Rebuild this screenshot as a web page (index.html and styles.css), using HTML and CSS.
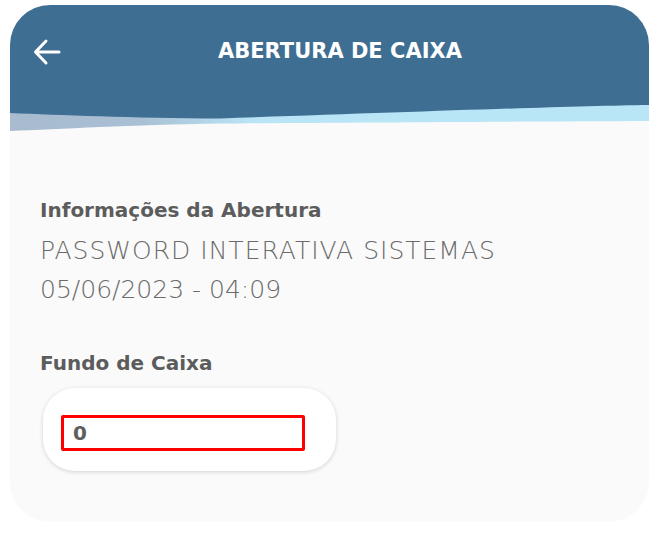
FILE: index.html
```html
<!DOCTYPE html>
<html lang="pt-BR">
<head>
<meta charset="utf-8">
<title>Abertura de Caixa</title>
<link rel="stylesheet" href="styles.css">
</head>
<body>
<div class="card">
  <header class="topbar">
    <button class="back" aria-label="Voltar">
      <svg width="30" height="28" viewBox="0 0 30 28"><path d="M27 14H4M14 3L3.5 14L14 25" fill="none" stroke="#fff" stroke-width="3" stroke-linecap="round" stroke-linejoin="round"/></svg>
    </button>
    <h1 class="title">ABERTURA DE CAIXA</h1>
  </header>
  <svg class="wave" width="639" height="28" viewBox="0 0 639 28" preserveAspectRatio="none">
    <defs>
      <linearGradient id="g" x1="0" x2="1" y1="0" y2="0">
        <stop offset="0" stop-color="#a8bbcf"/>
        <stop offset="0.2" stop-color="#a9bfd3"/>
        <stop offset="0.38" stop-color="#b9e5f6"/>
        <stop offset="1" stop-color="#b9e6f7"/>
      </linearGradient>
    </defs>
    <path d="M0,0 H639 V16 C520,16.5 330,17.5 210,18.5 C120,20 50,24 0,26 Z" fill="url(#g)"/>
    <path d="M0,0 H639 V0 C560,1 400,7 210,13.5 C120,13 50,10 0,8 Z" fill="#3f6e93"/>
  </svg>
  <main class="content">
    <h2 class="label">Informações da Abertura</h2>
    <p class="info first">PASSWORD INTERATIVA SISTEMAS</p>
    <p class="info">05/06/2023 - 04:09</p>
    <h2 class="label label-gap">Fundo de Caixa</h2>
    <div class="pill">
      <div class="field">0</div>
    </div>
  </main>
</div>
</body>
</html>
```

FILE: styles.css
```css
* { box-sizing: border-box; }
html, body { margin: 0; padding: 0; background: #ffffff; }
body { font-family: "DejaVu Sans", sans-serif; }

.card {
  margin: 5px 0 0 10px;
  width: 639px;
  height: 517px;
  border-radius: 40px;
  background: #fafafa;
  overflow: hidden;
}

.topbar {
  height: 100px;
  background: #3f6e93;
  display: flex;
  align-items: flex-start;
  padding: 31px 0 0 22px;
}

.back {
  border: 0;
  background: none;
  padding: 0;
  width: 30px;
  height: 28px;
  margin-top: 2px;
  display: block;
}

.title {
  margin: 0 0 0 156px;
  font-family: "DejaVu Sans", sans-serif;
  font-weight: 700;
  font-size: 21px;
  line-height: 30px;
  color: #ffffff;
}

.wave { display: block; }

.content {
  padding: 65px 30px 0 30px;
}

.label {
  margin: 0;
  font-family: "DejaVu Sans", sans-serif;
  font-weight: 700;
  font-size: 20px;
  line-height: 24px;
  color: #5c5c5c;
}

.info {
  margin: 0;
  font-family: "DejaVu Sans", sans-serif;
  font-weight: 200;
  font-size: 25px;
  line-height: 39px;
  color: #6b6b6b;
}

.info.first { margin-top: 9px; letter-spacing: 1px; }

.label-gap { margin-top: 42px; }

.pill {
  margin: 13px 0 0 3px;
  width: 293px;
  height: 83px;
  background: #ffffff;
  border-radius: 32px;
  box-shadow: 0 1px 4px rgba(0,0,0,0.16);
  padding: 27px 0 0 18px;
}

.field {
  width: 244px;
  height: 36px;
  border: 3px solid #ff0000;
  border-radius: 2px;
  padding: 0 0 0 9px;
  font-family: "DejaVu Sans", sans-serif;
  font-weight: 700;
  font-size: 20px;
  line-height: 30px;
  color: #5e5e5e;
}
```
